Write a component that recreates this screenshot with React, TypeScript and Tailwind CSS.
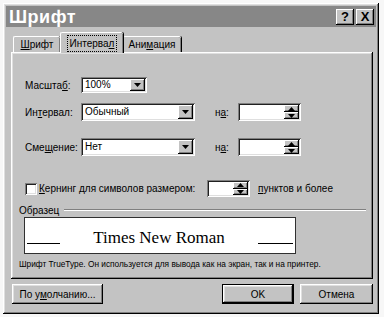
import React from "react";

const raised =
  "shadow-[inset_-1px_-1px_#000,inset_1px_1px_#fff,inset_-2px_-2px_#808080,inset_2px_2px_#dfdfdf]";
const sunken =
  "shadow-[inset_1px_1px_#808080,inset_-1px_-1px_#fff,inset_2px_2px_#202020,inset_-2px_-2px_#dfdfdf]";
const btn =
  "shadow-[inset_-1px_-1px_#000,inset_1px_1px_#fff,inset_-2px_-2px_#808080]";

function U({ children }: { children: React.ReactNode }) {
  return <span className="underline underline-offset-[1px]">{children}</span>;
}

function Arrow({ up = false }: { up?: boolean }) {
  return (
    <svg width="7" height="4" viewBox="0 0 7 4">
      <path d={up ? "M3.5 0 L7 4 L0 4 Z" : "M0 0 L7 0 L3.5 4 Z"} fill="#000" />
    </svg>
  );
}

function Combo({ className, value }: { className: string; value: string }) {
  return (
    <div className={`flex shrink-0 items-center bg-white ${sunken} ${className}`}>
      <span className="flex-1 pl-[4px] leading-none">{value}</span>
      <div
        className={`mr-[2px] flex h-[calc(100%-4px)] w-[15px] items-center justify-center bg-[#c3c3c3] ${btn}`}
      >
        <Arrow />
      </div>
    </div>
  );
}

function Spin({ className }: { className: string }) {
  return (
    <div className={`flex shrink-0 bg-white ${sunken} ${className}`}>
      <div className="flex-1" />
      <div className="my-[2px] mr-[2px] flex w-[15px] flex-col">
        <div className={`flex flex-1 items-center justify-center bg-[#c3c3c3] ${btn}`}>
          <Arrow up />
        </div>
        <div className={`flex flex-1 items-center justify-center bg-[#c3c3c3] ${btn}`}>
          <Arrow />
        </div>
      </div>
    </div>
  );
}

export default function App() {
  return (
    <div
      className="h-[317px] w-[384px] whitespace-nowrap bg-[#f7f7f7] p-[3px] text-[10px] text-black"
      style={{ fontFamily: '"Liberation Sans", Arial, sans-serif' }}
    >
      <div className={`h-[311px] w-[376px] bg-[#c3c3c3] p-[3px] ${raised}`}>
        {/* Title bar */}
        <div className="flex h-[21px] items-center justify-between bg-[#878787] pl-[3px] pr-[2px]">
          <span className="text-[18px] font-bold leading-none tracking-[0.5px] text-white">
            Шрифт
          </span>
          <div className="flex gap-[2px]">
            <div
              className={`flex h-[16px] w-[18px] items-center justify-center bg-[#c3c3c3] text-[13px] font-bold leading-none ${btn}`}
            >
              ?
            </div>
            <div
              className={`flex h-[16px] w-[18px] items-center justify-center bg-[#c3c3c3] text-[13px] font-bold leading-none ${btn}`}
            >
              X
            </div>
          </div>
        </div>

        {/* Tabs */}
        <div className="mt-[5px] flex h-[20px] items-end pl-[7px]">
          <div className="flex h-[16px] w-[47px] items-center justify-center rounded-t-[2px] border-l border-t border-white shadow-[inset_-1px_0_#808080,1px_0_#000]">
            <U>Ш</U>рифт
          </div>
          <div className="relative z-10 -mb-px flex h-[21px] w-[63px] items-center justify-center rounded-t-[2px] border-l border-t border-white bg-[#c3c3c3] shadow-[inset_-1px_0_#808080,1px_0_#000]">
            <span className="px-[2px] outline outline-1 outline-dotted outline-black">
              Интерва<U>л</U>
            </span>
          </div>
          <div className="flex h-[16px] w-[58px] items-center justify-center rounded-t-[2px] border-t border-white shadow-[inset_-1px_0_#808080,1px_0_#000]">
            Ани<U>м</U>ация
          </div>
        </div>

        {/* Panel */}
        <div className={`ml-[5px] h-[227px] w-[362px] pt-[25px] ${raised}`}>
          <div className="flex h-[16px] items-center pl-[14px]">
            <span className="w-[56px] shrink-0">
              Масшта<U>б</U>:
            </span>
            <Combo className="h-[16px] w-[66px]" value="100%" />
          </div>

          <div className="mt-[10px] flex h-[18px] items-center pl-[14px]">
            <span className="w-[56px] shrink-0">
              Ин<U>т</U>ервал:
            </span>
            <Combo className="h-[18px] w-[114px]" value="Обычный" />
            <span className="ml-[20px] w-[23px] shrink-0">
              н<U>а</U>:
            </span>
            <Spin className="h-[18px] w-[63px]" />
          </div>

          <div className="mt-[17px] flex h-[18px] items-center pl-[14px]">
            <span className="w-[56px] shrink-0">
              Сме<U>щ</U>ение:
            </span>
            <Combo className="h-[18px] w-[114px]" value="Нет" />
            <span className="ml-[20px] w-[23px] shrink-0">
              н<U>а</U>:
            </span>
            <Spin className="h-[18px] w-[63px]" />
          </div>

          <div className="mt-[24px] flex h-[17px] items-center pl-[14px]">
            <div className={`mr-[2px] h-[12px] w-[12px] shrink-0 bg-white ${sunken}`} />
            <span className="w-[168px] shrink-0">
              <U>К</U>ернинг для символов размером:
            </span>
            <Spin className="h-[17px] w-[43px]" />
            <span className="ml-[8px]">
              <U>п</U>унктов и более
            </span>
          </div>

          <div className="mt-[7px] flex h-[12px] items-center pl-[8px] pr-[7px]">
            <span>Образец</span>
            <div className="ml-[5px] h-[2px] flex-1 border-b border-t border-b-white border-t-[#808080]" />
          </div>

          <div className="ml-[13px] mt-[1px] flex h-[37px] w-[272px] items-end border border-[#303030] bg-white px-[2px] pb-[7px]">
            <div className="mb-[2px] h-px w-[33px] bg-black" />
            <span
              className="flex-1 text-center text-[17px] leading-none"
              style={{ fontFamily: '"Liberation Serif", "Times New Roman", serif' }}
            >
              Times New Roman
            </span>
            <div className="mb-[2px] h-px w-[35px] bg-black" />
          </div>

          <div className="mt-[5px] pl-[8px] text-[8.3px] leading-[11px]">
            Шрифт TrueType. Он используется для вывода как на экран, так и на принтер.
          </div>
        </div>

        {/* Buttons */}
        <div className="mt-[5px] flex h-[20px] pl-[6px]">
          <div className={`flex w-[91px] items-center justify-center bg-[#c3c3c3] ${raised}`}>
            По у<U>м</U>олчанию...
          </div>
          <div
            className={`ml-[119px] flex w-[72px] items-center justify-center border border-black bg-[#c3c3c3] ${raised}`}
          >
            OK
          </div>
          <div className={`ml-[6px] flex w-[73px] items-center justify-center bg-[#c3c3c3] ${raised}`}>
            Отмена
          </div>
        </div>
      </div>
    </div>
  );
}
